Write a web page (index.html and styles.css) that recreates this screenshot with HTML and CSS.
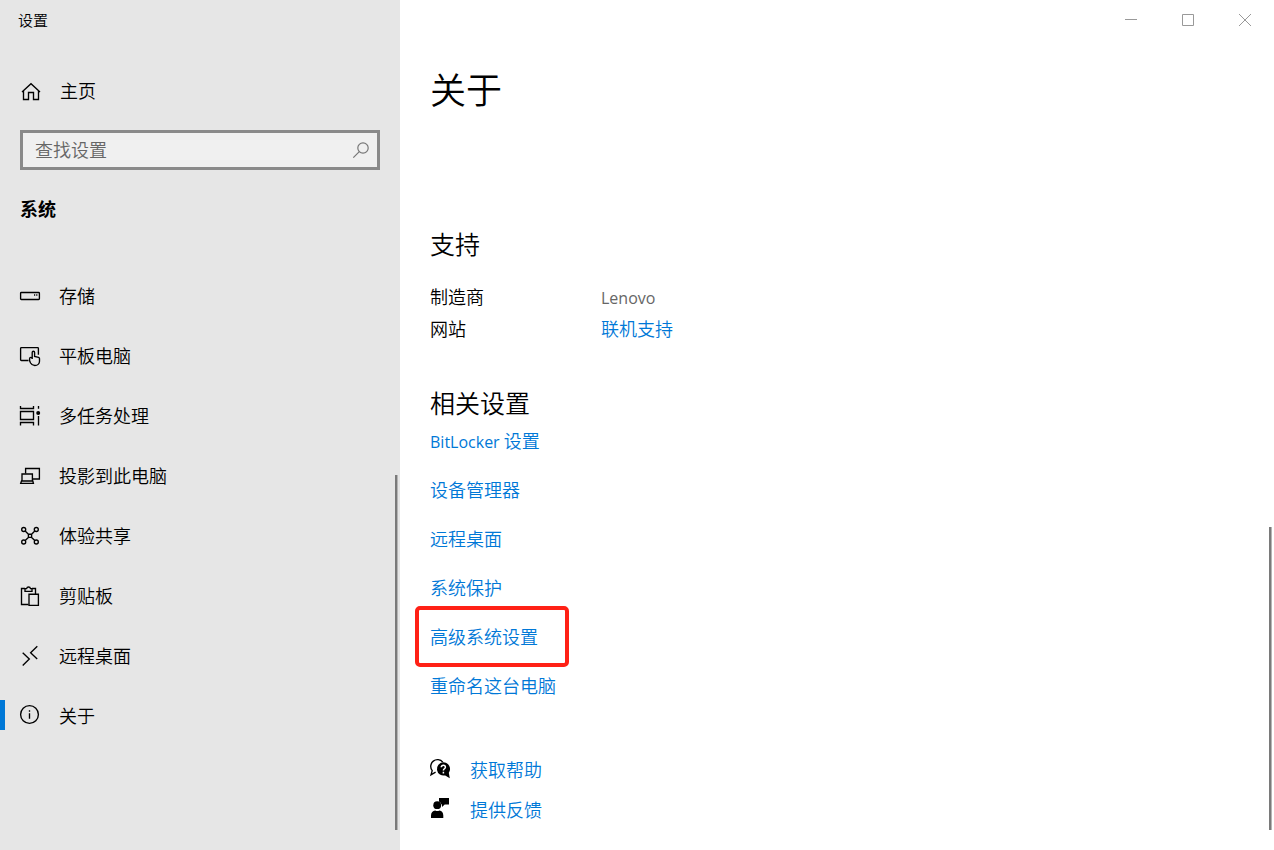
FILE: index.html
```html
<!DOCTYPE html>
<html lang="zh-CN">
<head>
    <meta charset="UTF-8">
    <meta name="viewport" content="width=device-width, initial-scale=1.0">
    <title>设置</title>
    <link rel="stylesheet" href="styles.css">
</head>
<body>
    <div id="app">
        <aside id="sidebar">
            <div class="window-title">设置</div>
            <a class="nav-link home" href="#">
                <svg class="icon" viewBox="0 0 20 20"><path d="M2 11 11 2.7l9 8.3M3.5 9.5v9h5v-7h5v7h5v-9"/></svg>
                <span>主页</span>
            </a>
            <form class="search">
                <input type="search" id="search-input" placeholder="查找设置" aria-label="查找设置">
                <button type="submit" aria-label="搜索">
                    <svg class="icon" viewBox="0 0 20 20"><circle cx="13" cy="8" r="5.2"/><path d="m9.3 11.7-6 6"/></svg>
                </button>
            </form>
            <h2 class="group-title">系统</h2>
            <nav>
                <a class="nav-link" href="#">
                    <svg class="icon" viewBox="0 0 20 20"><rect x=".6" y="6.5" width="18.8" height="7" rx=".8"/><path d="M14 9h1.2M16.2 9h1.2"/></svg>
                    <span>存储</span>
                </a>
                <a class="nav-link" href="#">
                    <svg class="icon" viewBox="0 0 20 20"><path d="M8.5 14.5H1.4a.8.8 0 0 1-.8-.8V2.4c0-.5.3-.8.8-.8h16.2c.5 0 .8.3.8.8v6.4"/><path d="M12.2 13V6.4a1.2 1.2 0 0 1 2.4 0v4l4 .9c.6.2.9.6.9 1.2v2.7c0 2.5-2 4.3-4.7 4.3-2 0-3.3-.8-4.2-2.5l-1-2.2v-2.3c0-.7.5-1.2 1.2-1.2.8 0 1.4.6 1.4 1.7z"/></svg>
                    <span>平板电脑</span>
                </a>
                <a class="nav-link" href="#">
                    <svg class="icon" viewBox="0 0 20 20"><path d="M.5 0v2.5h13V0M.5 5.5h13v8H.5zM.5 19.5v-3h13v3M18.5 0v2.8M18.5 10v9.5"/><circle class="solid" cx="18.2" cy="7" r="2"/></svg>
                    <span>多任务处理</span>
                </a>
                <a class="nav-link" href="#">
                    <svg class="icon" viewBox="0 0 20 20"><path d="M5.6 7.5v-5h13.8V13H13"/><path d="M2 15V8h10.4v7M1.5 15h11.3l.6 2.4H.7z"/></svg>
                    <span>投影到此电脑</span>
                </a>
                <a class="nav-link" href="#">
                    <svg class="icon" viewBox="0 0 20 20"><circle cx="3.7" cy="3.5" r="2"/><circle cx="16.3" cy="3.5" r="2"/><circle cx="3.7" cy="16" r="2"/><circle cx="16.3" cy="16" r="2"/><path d="M8.4 8.2h3.2v3.2H8.4zM5.2 5l3.2 3.2M14.8 5l-3.2 3.2M5.2 14.5l3.2-3.1M14.8 14.5l-3.2-3.1"/></svg>
                    <span>体验共享</span>
                </a>
                <a class="nav-link" href="#">
                    <svg class="icon" viewBox="0 0 20 20"><path d="M8.5 18.5h-7v-16H5M12 2.5h3.5V8M5 5.4V2.6h1.6a2 2 0 0 1 3.9 0H12v2.8z"/><path d="M9 8.2h9.4v11.2H9z"/></svg>
                    <span>剪贴板</span>
                </a>
                <a class="nav-link" href="#">
                    <svg class="icon" viewBox="0 0 20 20"><path d="m2.7 6.7 6.6 6.3-6.6 6.4M17.3.2l-6.7 6.5 6.6 6.4"/></svg>
                    <span>远程桌面</span>
                </a>
                <a class="nav-link active" href="#" aria-current="page">
                    <svg class="icon" viewBox="0 0 20 20"><circle cx="9.5" cy="8.5" r="8.9"/><path d="M9.5 7.2v5.6M9.5 4.2v1.5"/></svg>
                    <span>关于</span>
                </a>
            </nav>
            <div class="scrollbar sidebar-scrollbar"></div>
        </aside>

        <main id="content">
            <div class="window-controls">
                <button type="button" aria-label="最小化"><svg viewBox="0 0 12 12"><path d="M0 5.5h12"/></svg></button>
                <button type="button" aria-label="最大化"><svg viewBox="0 0 12 12"><path d="M.5.5h11v11H.5z"/></svg></button>
                <button type="button" aria-label="关闭"><svg viewBox="0 0 12 12"><path d="m0 0 12 12M12 0 0 12"/></svg></button>
            </div>
            <h1>关于</h1>

            <section class="support">
                <h2>支持</h2>
                <dl>
                    <dt>制造商</dt>
                    <dd><span class="latin">Lenovo</span></dd>
                    <dt>网站</dt>
                    <dd><a href="#">联机支持</a></dd>
                </dl>
            </section>

            <section class="related">
                <h2>相关设置</h2>
                <ul>
                    <li><a href="#"><span class="latin">BitLocker</span> 设置</a></li>
                    <li><a href="#">设备管理器</a></li>
                    <li><a href="#">远程桌面</a></li>
                    <li><a href="#">系统保护</a></li>
                    <li><a class="highlight" href="#">高级系统设置</a></li>
                    <li><a href="#">重命名这台电脑</a></li>
                </ul>
            </section>

            <div class="help">
                <a href="#">
                    <svg class="icon" viewBox="0 0 20 20"><path d="M5.6 13.2 1 15.8l1.2-4.2A6.3 6.3 0 1 1 12.8 3.2"/><path class="solid" d="M13.2 3.2a6.7 6.7 0 0 1 5.6 10.5l1 5.6-4.6-2.9A6.7 6.7 0 1 1 13.2 3.2z"/><path class="mark" d="M11.2 8.3c0-2.7 4.2-2.5 4.2-.1 0 1.5-2 1.6-2 3.2M13.4 12.8v1.6"/></svg>
                    <span>获取帮助</span>
                </a>
                <a href="#">
                    <svg class="icon" viewBox="0 0 20 20"><path class="solid" d="M9 -1h10v6.5h-4.3L12 8V5.5h-.6A4.6 4.6 0 0 0 9 2.4z"/><circle class="solid" cx="7.2" cy="6.2" r="3.9"/><path class="solid" d="M1 19v-2.6c0-3 1.8-4.6 4.2-5 1.3.8 2.8.8 4.2 0 2.4.4 3.9 2 3.9 5V19z"/></svg>
                    <span>提供反馈</span>
                </a>
            </div>
            <div class="scrollbar content-scrollbar"></div>
        </main>
    </div>
</body>
</html>
```
FILE: styles.css
```css
* {
    box-sizing: border-box;
}
body {
    margin: 0;
    font-family: "Noto Sans CJK SC", sans-serif;
    font-size: 18px;
    font-weight: 350;
    line-height: 32px;
    color: #000;
    background-color: #fff;
}
h1, h2, ul, dl, dd {
    margin: 0;
    padding: 0;
    font-weight: inherit;
}
ul {
    list-style: none;
}
a {
    color: #0078d7;
    text-decoration: none;
}
button {
    display: flex;
    align-items: center;
    justify-content: center;
    padding: 0;
    border: none;
    background: none;
}
#app {
    display: flex;
    min-height: 100vh;
}

/* Icons */
.icon {
    width: 20px;
    height: 20px;
    flex: none;
    overflow: visible;
    fill: none;
    stroke: #000;
    stroke-width: 1.35;
}
.icon .solid {
    fill: #000;
    stroke: none;
}
.icon .mark {
    stroke: #fff;
    stroke-width: 1.5;
}

/* Sidebar */
#sidebar {
    position: relative;
    flex: 0 0 400px;
    background-color: #e6e6e6;
}
.window-title {
    padding-left: 18px;
    font-size: 15px;
    line-height: 40px;
}
.nav-link {
    display: flex;
    align-items: center;
    gap: 19px;
    height: 60px;
    padding: 0 20px;
    color: #000;
}
.nav-link span {
    padding-bottom: 2px;
}
.home {
    gap: 20px;
    margin-top: 21px;
}
.search {
    display: flex;
    height: 40px;
    margin: 9px 20px 0;
    border: 3px solid #8a8a8a;
    background-color: #f0f0f0;
}
.search input {
    flex: 1;
    min-width: 0;
    padding: 0 12px 2px;
    border: none;
    outline: none;
    background: none;
    font: inherit;
}
.search input::placeholder {
    color: #666;
    opacity: 1;
}
.search button {
    width: 34px;
}
.search .icon {
    stroke: #777;
    stroke-width: 1.2;
}
.group-title {
    margin: 18px 20px 38px;
    font-size: 18px;
    font-weight: 700;
    line-height: 40px;
}
.active {
    position: relative;
}
.active::before {
    content: "";
    position: absolute;
    left: 0;
    top: 14px;
    width: 5px;
    height: 30px;
    background-color: #0078d7;
}

/* Content */
#content {
    position: relative;
    flex: 1;
    padding-left: 30px;
}
.window-controls {
    display: flex;
    justify-content: flex-end;
    padding-right: 1px;
}
.window-controls button {
    width: 57px;
    height: 40px;
}
.window-controls svg {
    width: 12px;
    height: 12px;
    fill: none;
    stroke: #999;
}
h1 {
    margin-top: 24px;
    font-size: 36px;
    line-height: 48px;
}
#content h2 {
    font-size: 25px;
    line-height: 40px;
}
.support {
    margin-top: 111px;
}
dl {
    display: grid;
    grid-template-columns: 171px 1fr;
    margin-top: 17px;
}
dd {
    color: #666;
}
.latin {
    font-family: "Open Sans", sans-serif;
    font-size: 16px;
    font-weight: 400;
    line-height: 1;
}
.related {
    margin-top: 38px;
}
.related li {
    line-height: 49px;
}
.related ul {
    margin-top: -6px;
}
.highlight {
    position: relative;
}
.highlight::after {
    content: "";
    position: absolute;
    inset: -17px -31px -18px -15px;
    border: 4px solid #ff2116;
    border-radius: 5px;
}
.help {
    display: flex;
    flex-direction: column;
    margin-top: 39px;
}
.help a {
    display: flex;
    align-items: center;
    gap: 20px;
    height: 40px;
}

/* Scrollbars */
.scrollbar {
    position: absolute;
    right: 2px;
    bottom: 20px;
    width: 3px;
    background-color: #7a7a7a;
    border-right: 1px solid #b5b5b5;
}
.sidebar-scrollbar {
    height: 355px;
}
.content-scrollbar {
    height: 303px;
}
```
